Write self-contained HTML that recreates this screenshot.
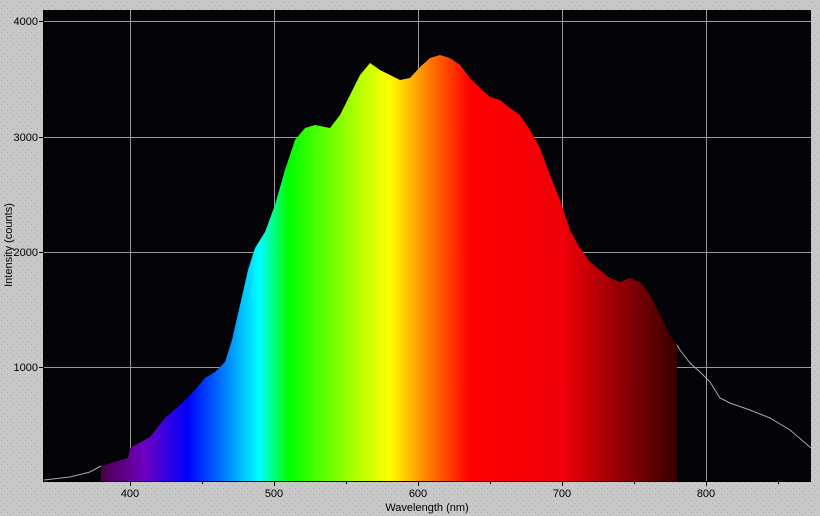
<!DOCTYPE html>
<html><head><style>
html,body{margin:0;padding:0;width:820px;height:516px;overflow:hidden;background:#c6c6c6;}
svg{display:block}
text{font-family:"Liberation Sans",sans-serif;font-size:11px;fill:#000}
</style></head><body>
<svg width="820" height="516" viewBox="0 0 820 516">
<defs>
<pattern id="dots" width="6" height="6" patternUnits="userSpaceOnUse">
<rect width="6" height="6" fill="#c8c8c8"/><rect x="1" y="2" width="1" height="1" fill="#a8a8a8"/><rect x="4" y="5" width="1" height="1" fill="#b0b0b0"/>
</pattern>
<linearGradient id="sp" x1="101" x2="677" y1="0" y2="0" gradientUnits="userSpaceOnUse">
<stop offset="0" stop-color="#4a0048"/>
<stop offset="0.075" stop-color="#7000c0"/>
<stop offset="0.15" stop-color="#0000ff"/>
<stop offset="0.2" stop-color="#0060ff"/>
<stop offset="0.275" stop-color="#00ffff"/>
<stop offset="0.325" stop-color="#00ff00"/>
<stop offset="0.45" stop-color="#b8ff00"/>
<stop offset="0.5" stop-color="#ffff00"/>
<stop offset="0.575" stop-color="#ff7000"/>
<stop offset="0.64" stop-color="#ff0000"/>
<stop offset="0.8" stop-color="#f00008"/>
<stop offset="1" stop-color="#380000"/>
</linearGradient>
</defs>
<rect width="820" height="516" fill="url(#dots)"/>
<rect x="44" y="10" width="767" height="471" fill="#040308"/>
<g stroke="#9a9a9a" stroke-width="1">
<line x1="130.5" y1="10" x2="130.5" y2="481"/><line x1="274.5" y1="10" x2="274.5" y2="481"/><line x1="418.5" y1="10" x2="418.5" y2="481"/><line x1="562.5" y1="10" x2="562.5" y2="481"/><line x1="706.5" y1="10" x2="706.5" y2="481"/>
<line x1="44" y1="21.5" x2="811" y2="21.5"/><line x1="44" y1="137.5" x2="811" y2="137.5"/><line x1="44" y1="252.5" x2="811" y2="252.5"/><line x1="44" y1="367.5" x2="811" y2="367.5"/>
</g>
<polygon fill="url(#sp)" points="101,481 101,466 128,458 130,448 150,437 165,418 180,405 195,390 205,378 215,372 225,362 232,340 240,305 248,270 255,248 265,232 275,205 285,170 295,140 305,128 315,125 330,128 340,115 350,95 360,75 370,63 380,70 390,75 400,80 410,78 420,67 430,58 440,55 450,58 460,65 470,78 480,88 490,97 500,100 510,108 520,115 530,130 540,148 550,175 560,200 570,230 580,248 590,262 600,270 610,278 620,282 630,278 640,282 650,295 660,315 670,335 677,345 677,481"/>
<polyline fill="none" stroke="#a8a8a8" stroke-width="1" points="44,480 70,477 90,472 101,466"/>
<polyline fill="none" stroke="#a8a8a8" stroke-width="1" points="677,345 680,350 690,363 700,372 710,382 720,398 730,403 750,410 770,418 790,430 811,448"/>
<g stroke="#000" stroke-width="1">
<line x1="44" y1="481.5" x2="811" y2="481.5"/><line x1="43.5" y1="10" x2="43.5" y2="482"/>
<line x1="130.5" y1="482" x2="130.5" y2="486"/><line x1="274.5" y1="482" x2="274.5" y2="486"/><line x1="418.5" y1="482" x2="418.5" y2="486"/><line x1="562.5" y1="482" x2="562.5" y2="486"/><line x1="706.5" y1="482" x2="706.5" y2="486"/>
<line x1="202.5" y1="482" x2="202.5" y2="484"/><line x1="346.5" y1="482" x2="346.5" y2="484"/><line x1="490.5" y1="482" x2="490.5" y2="484"/><line x1="634.5" y1="482" x2="634.5" y2="484"/><line x1="778.5" y1="482" x2="778.5" y2="484"/>
<line x1="39" y1="21.5" x2="44" y2="21.5"/><line x1="39" y1="137.5" x2="44" y2="137.5"/><line x1="39" y1="252.5" x2="44" y2="252.5"/><line x1="39" y1="367.5" x2="44" y2="367.5"/>
</g>
<g text-anchor="end">
<text x="38" y="25">4000</text><text x="38" y="141">3000</text><text x="38" y="256">2000</text><text x="38" y="371">1000</text>
</g>
<g text-anchor="middle">
<text x="130" y="497">400</text><text x="274" y="497">500</text><text x="418" y="497">600</text><text x="562" y="497">700</text><text x="706" y="497">800</text>
<text x="427" y="511">Wavelength (nm)</text>
<text transform="translate(12,245) rotate(-90)">Intensity (counts)</text>
</g>
</svg>
</body></html>
